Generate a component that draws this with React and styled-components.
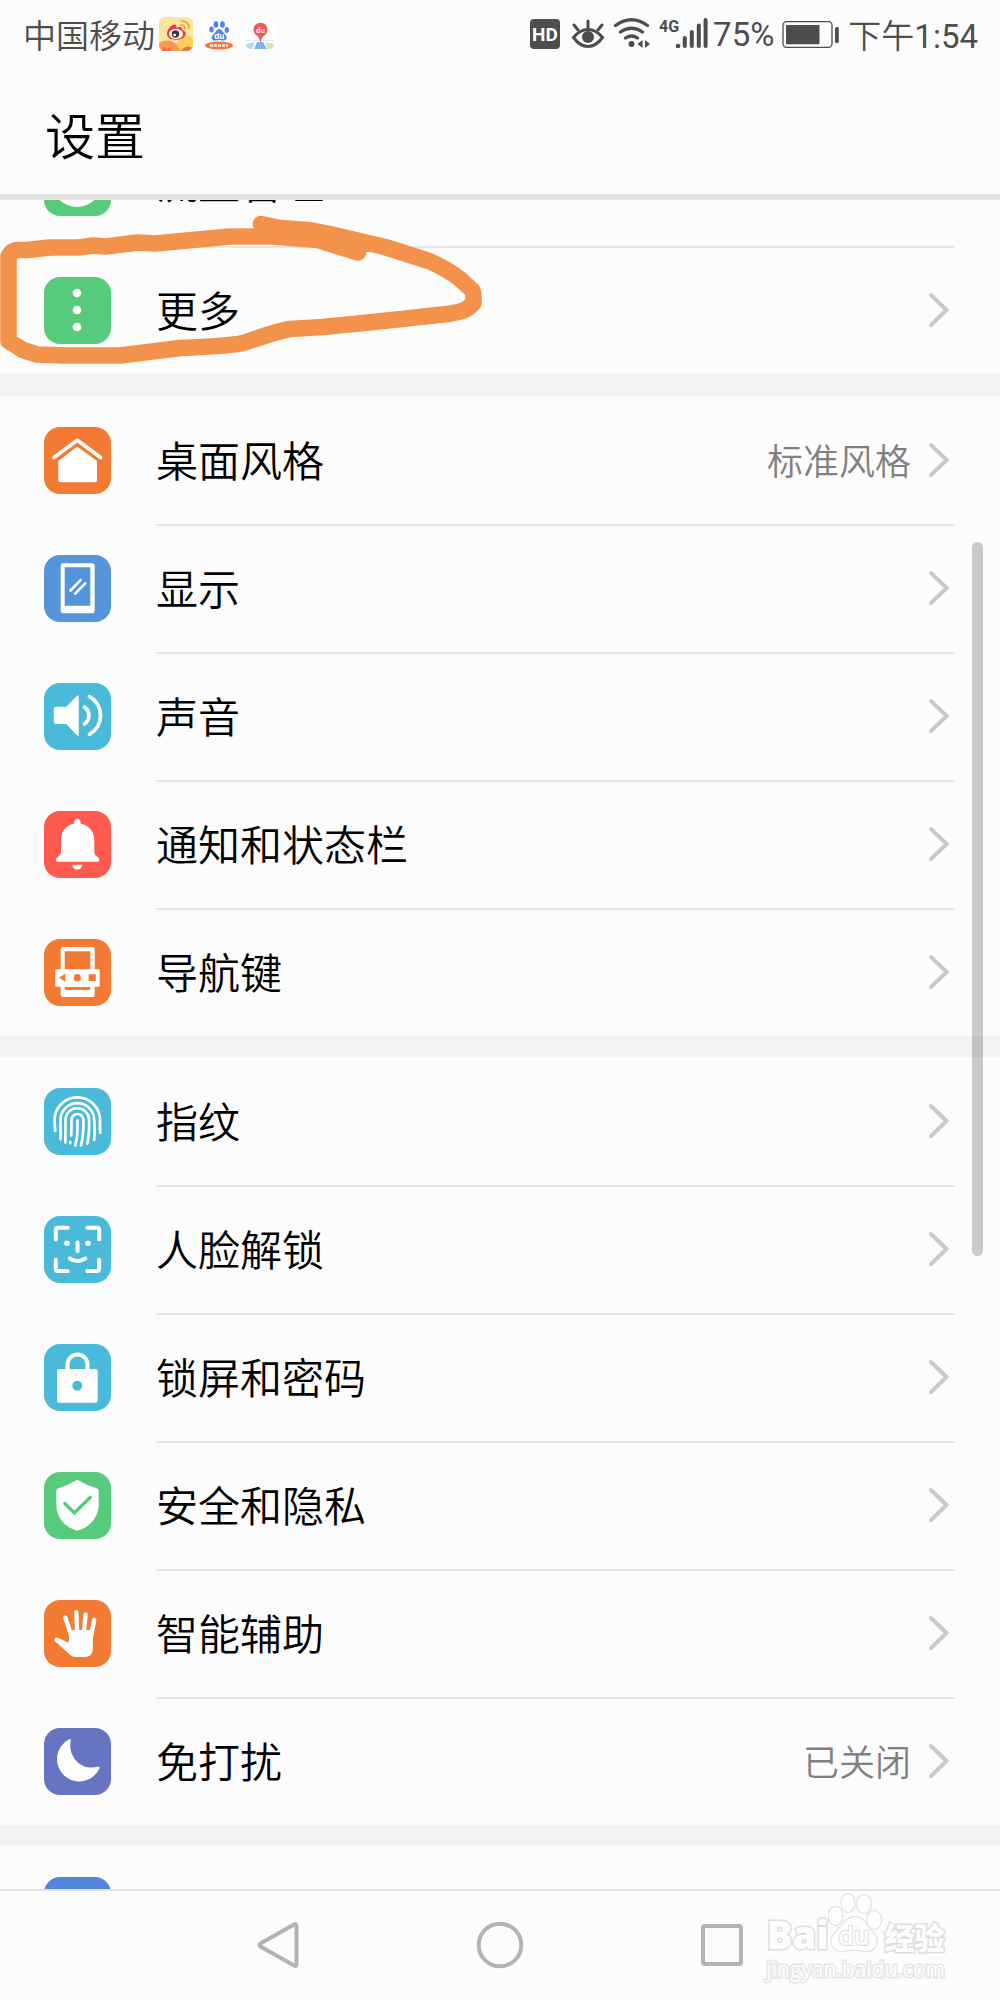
import { useLayoutEffect, useRef } from "react"

import styled, { createGlobalStyle } from "styled-components"


const colors = {
  green: "#56cb7b",
  orange: "#f37a32",
  blue: "#5596da",
  cyan: "#4abada",
  red: "#ff5a4d",
  purple: "#6674c2",
  royal: "#5485dc",
}

const icons = {

  data: <circle cx="33" cy="33" r="25" />,

  more: <><circle cx="33" cy="16" r="4.3" /><circle cx="33" cy="33" r="4.3" /><circle cx="33" cy="50" r="4.3" /></>,

  home: <>
    <path d="M10 30.5 33.3 13.3 56.600 30.5" fill="none" stroke="#fff" strokeWidth="3.800" strokeLinecap="round" strokeLinejoin="round" />
    <path d="M33.300 19.600 53 34V53.500Q53 55.300 51.200 55.300H16.200Q14.300 55.300 14.300 53.500V34Z" />
  </>,

  display: <>
    <path fillRule="evenodd" d="M19 8.300H48.400Q50.700 8.300 50.700 10.600V56Q50.700 58.300 48.400 58.300H19Q16.700 58.300 16.700 56V10.600Q16.700 8.300 19 8.300ZM20.700 12.300V50.700H46.300V12.300Z" />
    <path d="M26.500 35.500 36.600 25.200M31.200 38.700 41.300 28.400" stroke="#fff" strokeWidth="2.600" strokeLinecap="round" />
  </>,

  sound: <>
    <path d="M12 23.700H22.300L33 12.800Q34.800 11.500 34.800 13.500V51.500Q34.800 53.500 33 52.200L22.300 41H12Q9.700 41 9.700 38.700V26Q9.700 23.700 12 23.700Z" />
    <path d="M40.500 24A10.500 10.500 0 0 1 40.500 41M45.500 13.700A21.500 21.500 0 0 1 45.500 51.300" fill="none" stroke="#fff" strokeWidth="3.800" strokeLinecap="round" />
  </>,

  bell: <>
    <path d="M33.300 7.800C35.500 7.800 36.700 9.500 36.700 12.800C45 14.300 50.300 20.500 50.300 29V41Q50.300 44 53 45.600Q55.300 47 55.300 49.300Q55.300 50.700 53.600 50.700H13Q11.500 50.700 11.700 49Q12 47 14 45.800Q17 44 17 41V29C17 20.500 22 14.300 30 12.800C30 9.500 31.100 7.800 33.300 7.800Z" />
    <path d="M28.300 53.700H38.300A5 5 0 0 1 28.300 53.700Z" />
  </>,

  navkey: <>
    <path fillRule="evenodd" d="M19 8H48.400Q50.700 8 50.700 10.300V30.300H54.700Q55.700 30.300 55.700 31.300V46.700Q55.700 47.700 54.700 47.700H50.700V56Q50.700 58 48.400 58H19Q16.700 58 16.700 56V47.700H12.300Q11.300 47.700 11.300 46.700V31.300Q11.300 30.300 12.300 30.300H16.700V10.300Q16.700 8 19 8ZM20.700 12.300V30.300H46.300V12.300ZM20.700 48V50.900H46.300V48ZM15 38.700 21.300 42.800V34.500ZM44.700 35.300V42H51.700V35.300Z" />
    <circle cx="33.3" cy="38.7" r="3.6" fill={colors.orange} />
  </>,

  finger: <>
    <g fill="none" stroke="#fff" strokeWidth="2.700" strokeLinecap="round">
      <path d="M11.300 43Q10.600 38 10.600 32A22.700 22.700 0 0 1 56 32Q56 39 56.200 44.700" />
      <path d="M16.500 51.300V32A16.800 16.800 0 0 1 50.200 32Q51 45 50 52" />
      <path d="M21.300 54.300Q21.500 46 21.500 32A11.800 11.800 0 0 1 45.100 32Q45.500 46 43.300 55.600" />
      <path d="M27.200 47.500Q27.500 40 27.500 32A6 6 0 0 1 39.500 32Q39.500 48 37 57.500" />
      <path d="M33.500 32.500Q34 47 31.300 57.500M26.200 54V55.300" />
    </g>
  </>,

  face: <>
    <g fill="none" stroke="#fff" strokeWidth="4" strokeLinecap="round">
      <path d="M23.700 11.700H14Q11.800 11.700 11.800 14V23.300M43.300 11.700H53Q55.200 11.700 55.200 14V23.300M55.200 43.700V52.700Q55.200 55 53 55H43.300M23.700 55H14Q11.800 55 11.800 52.700V43.700" />
      <path d="M33.500 26.500V35M25.700 42.300Q33.500 47.700 41.300 42.300" />
    </g>
    <circle cx="23" cy="27.300" r="2.800" /><circle cx="44" cy="27.300" r="2.800" />
  </>,

  lock: <>
    <path d="M23.500 27V20.500A10 10 0 0 1 43.500 20.500V27" fill="none" stroke="#fff" strokeWidth="4" />
    <path fillRule="evenodd" d="M15 25H51.700Q53.700 25 53.700 27V56.700Q53.700 58.700 51.700 58.700H15Q13 58.700 13 56.700V27Q13 25 15 25ZM33.300 36.700A5 5 0 1 0 33.300 46.700A5 5 0 1 0 33.300 36.700Z" />
  </>,

  shield: <>
    <path d="M33.300 7.700Q43 13.300 53 16.600Q54.700 17.200 54.700 19V32C54.700 45 46.500 55 33.300 58.700C20 55 12.300 45 12.300 32V19Q12.300 17.200 14 16.600Q24 13.300 33.300 7.700Z" />
    <path d="M20.900 31.500 30.300 40.900 46.200 25.500" fill="none" stroke={colors.green} strokeWidth="3.300" strokeLinecap="round" />
  </>,

  hand: <>
    <path d="M12.500 39.700 29 47M21.300 17.700 27.500 36M32.300 12.300 33.300 36M41.600 14.500 39.500 36M50.200 19.800 46.500 39" stroke="#fff" strokeWidth="4.400" strokeLinecap="round" />
    <path d="M24.800 30H48.900V48Q48.900 56.700 41 56.900H31.500Q28.500 56.900 26 54.700L11.300 41.500 14 38 22 42Q25 43.300 25 40Z" />
  </>,

  moon: <path d="M25 11.300Q27 10.500 26.800 12.700C23.500 27 36 43.500 54 38.800Q56.300 38.500 55.500 40.500A22.300 22.300 0 1 1 25 11.300Z" />,

  user: <circle cx="33" cy="33" r="12" />,

}

const groups = [
  [
    { label: "流量管理", icon: "data", color: colors.green },
    { label: "更多", icon: "more", color: colors.green },
  ],
  [
    { label: "桌面风格", icon: "home", color: colors.orange, value: "标准风格" },
    { label: "显示", icon: "display", color: colors.blue },
    { label: "声音", icon: "sound", color: colors.cyan },
    { label: "通知和状态栏", icon: "bell", color: colors.red },
    { label: "导航键", icon: "navkey", color: colors.orange },
  ],
  [
    { label: "指纹", icon: "finger", color: colors.cyan },
    { label: "人脸解锁", icon: "face", color: colors.cyan },
    { label: "锁屏和密码", icon: "lock", color: colors.cyan },
    { label: "安全和隐私", icon: "shield", color: colors.green },
    { label: "智能辅助", icon: "hand", color: colors.orange },
    { label: "免打扰", icon: "moon", color: colors.purple, value: "已关闭" },
  ],
  [
    { label: "", icon: "user", color: colors.royal },
  ],
]

const WeiboIcon = () => (
  <svg width="34" height="34" viewBox="0 0 34 34">
    <rect width="34" height="34" rx="6" fill="#fce49b" />
    <path d="M22 20Q30 16 34 22V28A6 6 0 0 1 28 34H12Z" fill="#f9cf5b" />
    <path d="M0 26Q8 21 16 26Q21 30 20 34H6A6 6 0 0 1 0 28Z" fill="#f79a56" />
    <path d="M3 34 5 29 8 33 11 30 13 34ZM22 34Q27 27 33 31L29 34Z" fill="#f4703c" />
    <path d="M8 17C8 12 14 6 17 8Q18 9 17.500 11C21 9 24 10 23 13C27 14 27.500 17 26 19C23 24 8 24.500 8 17Z" fill="#e73a43" />
    <ellipse cx="17" cy="17" rx="7" ry="5" fill="#fff" />
    <circle cx="16.500" cy="17" r="3.700" fill="#3d3a3a" /><circle cx="15.700" cy="18" r="1.300" fill="#fff" />
    <path d="M22 8Q26 8 26 12M22.500 4Q30 4 30 11" fill="none" stroke="#f79a3e" strokeWidth="1.700" strokeLinecap="round" />
  </svg>
)

const BaiduIcon = () => (
  <svg width="30" height="34" viewBox="0 0 30 34">
    <rect x="1" y="2" width="28" height="30" rx="5" fill="#fff" />
    <g fill="#4c84f3">
      <ellipse cx="12" cy="7.500" rx="2.400" ry="3.300" /><ellipse cx="18.500" cy="7.500" rx="2.400" ry="3.300" />
      <ellipse cx="7.500" cy="12.500" rx="2.200" ry="2.900" /><ellipse cx="22.800" cy="13" rx="2.200" ry="2.900" />
      <path d="M15 12Q17.500 12 19 15L22 18.500C24 22 21 24 18.500 23.500Q15 22.700 12 23.500C8 24 6.500 21 8.500 18.500L11.500 15Q13 12 15 12Z" />
    </g>
    <text x="15.300" y="22" textAnchor="middle" fontFamily="Inter, sans-serif" fontSize="8" fontWeight="700" fill="#fff">du</text>
    <ellipse cx="15" cy="28.500" rx="14" ry="4" fill="#f5763b" />
    <path d="M6 28.500H24" stroke="#fff" strokeWidth="2.600" strokeDasharray="3 1" opacity=".8" />
  </svg>
)

const MapIcon = () => (
  <svg width="30" height="34" viewBox="0 0 30 34">
    <rect y="2" width="30" height="30" rx="6" fill="#fff" />
    <path d="M1 23H29V24H1Z" fill="#e4e8ec" />
    <path d="M1 27 10 25 7 32H5Q1 31 1 27Z" fill="#a8dcf5" /><path d="M29 27 20 25 23 32H25Q29 31 29 27Z" fill="#cdeaa0" />
    <path d="M12 25H18L22 32H9Z" fill="#7ab6f5" />
    <path d="M15.500 26Q14.500 20 11 18A7 7 0 1 1 20 18Q16.500 20 15.500 26Z" fill="#ee5a56" />
    <text x="15.500" y="16" textAnchor="middle" fontFamily="Inter, sans-serif" fontSize="7" fontWeight="700" fill="#fff">du</text>
  </svg>
)

const SignalIcons = () => (
  <svg width="178" height="34" viewBox="528 17 178 34" fill="#4d4d4d">
    <rect x="528" y="19" width="30" height="30" rx="4" />
    <text x="543" y="41" textAnchor="middle" fontFamily="Roboto, sans-serif" fontSize="19" fontWeight="700" fill="#fff">HD</text>
    <path d="M571.500 37.500Q578 29.500 586 29.500T600.500 37.500Q594 46.500 586 46.500T571.500 37.500Z" fill="none" stroke="#4d4d4d" strokeWidth="3" />
    <circle cx="586" cy="37" r="6" />
    <path d="M586 21V28M572 25 576 30M600 25 596 30" stroke="#4d4d4d" strokeWidth="3" strokeLinecap="round" />
    <g fill="none" stroke="#4d4d4d" strokeWidth="3.200" strokeLinecap="round">
      <path d="M613.500 25.500Q629.500 14 645.500 25.500M618.500 32Q629.500 24.500 640.500 32M623.500 38Q629.500 34 635.500 38" />
    </g>
    <circle cx="629.500" cy="44" r="3" />
    <path d="M640.500 40V48L635.500 44ZM643 40V48L648 44Z" />
    <text x="657" y="31.500" fontFamily="Roboto, sans-serif" fontSize="16" fontWeight="700" textAnchor="start">4G</text>
    <circle cx="676" cy="46" r="2.300" />
    <path d="M682.800 38V46M689.800 32V46M696.800 25.500V46M703.600 20V46" stroke="#4d4d4d" strokeWidth="4" strokeLinecap="round" />
  </svg>
)

const BatteryIcon = () => (
  <svg width="58" height="34" viewBox="781 17 58 34" fill="#4d4d4d">
    <rect x="782" y="21.700" width="49" height="25.600" rx="3.500" fill="none" stroke="#4d4d4d" strokeWidth="1.300" />
    <rect x="785" y="25" width="33.500" height="19.300" rx="1" />
    <rect x="834" y="27" width="3.800" height="16" rx="1.500" />
  </svg>
)

const Chevron = () => (
  <svg width="22" height="36" viewBox="0 0 22 36" fill="none" stroke="#c9c9c9" strokeWidth="4" strokeLinecap="round">
    <path d="M3 3 18.500 18 3 33" />
  </svg>
)

const Scribble = () => (
  <ScribbleStyle width="490" height="160" viewBox="0 210 490 160" aria-hidden="true">
    <path d="M261 224 280 228 308 230 334 235 385 247 429 261Q447 269 460 279L472 290Q474 293 473.500 303L468 308Q461 313 438 315L383 321 323 327 290 329Q278 331 243 343 230 346 180 348L120 355.500H67L37 354.500 23 350 8.500 341V256L11 253Q13 250 18 250H27L50 247.500H78L93 245.500 106 246.500 138 242.500 155 243.500 230 236.500H273L318 240 358 252.500" />
  </ScribbleStyle>
)

const Watermark = () => (
  <WatermarkStyle>
    <div className="brand">
      <span className="bai">Bai</span>
      <svg width="54" height="60" viewBox="0 0 54 60">
        <ellipse cx="7.500" cy="23" rx="7" ry="9" /><ellipse cx="20" cy="10" rx="6.600" ry="9" />
        <ellipse cx="36" cy="11" rx="7" ry="9" /><ellipse cx="46" cy="27" rx="7" ry="9" />
        <path d="M27 24C36 24 39 34 44 39C54 49 46 58 39 58C34 58 31 56.500 26 56.500S18 58 13 58C4 57 0 48 7 40C13 35 17 24 27 24Z" />
        <text x="26" y="52" textAnchor="middle">du</text>
      </svg>
      <span className="exp">经验</span>
    </div>
    <div className="site">jingyan.baidu.com</div>
  </WatermarkStyle>
)

const SettingRow = ({ label, icon, color, value }) => (
  <RowStyle type="button" aria-label={label || "账户"}>
    <TileStyle viewBox="0 0 67 67" $color={color}>{icons[icon]}</TileStyle>
    <BodyStyle>
      <span className="label">{label}</span>
      {value && <span className="value">{value}</span>}
      <Chevron />
    </BodyStyle>
  </RowStyle>
)

const App = () => {

  const list = useRef(null)

  useLayoutEffect(() => {

    list.current.scrollTop = 82

  }, [])

  return (

    <ScreenStyle>

      <GlobalStyle />

      <StatusBarStyle>
        <div className="side apps">
          <span>中国移动</span>
          <WeiboIcon />
          <BaiduIcon />
          <MapIcon />
        </div>
        <div className="side">
          <SignalIcons />
          <b>75%</b>
          <BatteryIcon />
          <span>下午<b>1:54</b></span>
        </div>
      </StatusBarStyle>

      <HeaderStyle><h1>设置</h1></HeaderStyle>

      <ListStyle ref={list}>
        {groups.map((rows, i) => (
          <GroupStyle key={i}>
            {rows.map(row => <SettingRow {...row} key={row.icon} />)}
          </GroupStyle>
        ))}
      </ListStyle>

      <NavBarStyle>
        <button type="button" aria-label="返回">
          <svg width="46" height="50" viewBox="0 0 46 50"><path d="M39 4.500Q41.500 3 41.500 6V44Q41.500 47 39 45.500L5.500 26.500Q3.500 25 5.500 23.500Z" /></svg>
        </button>
        <button type="button" aria-label="主页">
          <svg width="50" height="50" viewBox="0 0 50 50"><circle cx="25" cy="25" r="21.300" /></svg>
        </button>
        <button type="button" aria-label="最近任务">
          <svg width="46" height="46" viewBox="0 0 46 46"><rect x="4" y="4" width="38" height="38" rx="2" /></svg>
        </button>
      </NavBarStyle>

      <ThumbStyle />
      <Scribble />
      <Watermark />

    </ScreenStyle>

  )

}

const GlobalStyle = createGlobalStyle`

  *{
    box-sizing: border-box;
  }

  body{
    margin: 0;
    background: #fcfcfc;
    font-family: Roboto, "Noto Sans CJK SC", sans-serif;
  }

  button{
    border: 0;
    padding: 0;
    background: none;
    font: inherit;
    color: inherit;
  }

  svg{
    display: block;
    flex: none;
  }

`

const ScreenStyle = styled.div`
  position: relative;
  display: flex;
  flex-direction: column;
  height: 100vh;
  overflow: hidden;
  background: #fcfcfc;
`

const StatusBarStyle = styled.div`
  display: flex;
  justify-content: space-between;
  height: 68px;
  padding: 0 22px 0 23px;
  color: #4d4d4d;
  font-size: 33px;
  font-weight: 350;

  .side{
    display: flex;
    align-items: center;
    gap: 8px;
    white-space: nowrap;
  }

  .side svg + b{
    margin-left: -3px;
  }

  .apps{
    gap: 11px;
  }

  .apps span{
    margin-right: -7px;
  }

  b{
    font-weight: 400;
  }
`

const HeaderStyle = styled.header`
  display: flex;
  align-items: center;
  height: 132px;
  padding: 4px 45px 0;
  border-bottom: 6px solid #e2e2e2;

  h1{
    margin: 0;
    color: #000;
    font-size: 50px;
    font-weight: 350;
  }
`

const ListStyle = styled.main`
  flex: 1;
  min-height: 0;
  overflow-y: auto;
  scrollbar-width: none;
`

const GroupStyle = styled.section`
  & + &{
    border-top: 22px solid #f3f3f3;
  }

  & + & + &{
    border-top-width: 21px;
  }
`

const BodyStyle = styled.span`
  display: flex;
  flex: 1;
  align-items: center;
  height: 100%;
  padding-right: 5px;

  .label, .value{
    padding-top: 5px;
    font-weight: 350;
  }

  .label{
    flex: 1;
    color: #000;
    font-size: 42px;
  }

  .value{
    margin-right: 17px;
    color: #808080;
    font-size: 36px;
  }
`

const RowStyle = styled.button`
  display: flex;
  align-items: center;
  gap: 45px;
  width: 100%;
  height: 128px;
  padding: 0 45px 0 44px;
  text-align: left;
  line-height: 1;

  & + & ${BodyStyle}{
    box-shadow: inset 0 2px #e6e6e6;
  }
`

const TileStyle = styled.svg`
  width: 67px;
  height: 67px;
  border-radius: 16px;
  background: ${p => p.$color};
  fill: #fff;
`

const NavBarStyle = styled.nav`
  display: flex;
  justify-content: center;
  height: 111px;
  padding-bottom: 2px;
  border-top: 2px solid #e3e3e3;

  button{
    display: flex;
    align-items: center;
    justify-content: center;
    width: 222px;
  }

  svg{
    fill: none;
    stroke: #b3b3b3;
    stroke-width: 4;
  }
`

const ThumbStyle = styled.div`
  position: absolute;
  top: 542px;
  right: 17px;
  width: 11px;
  height: 714px;
  border-radius: 6px;
  background: rgba(0, 0, 0, 0.2);
`

const ScribbleStyle = styled.svg`
  position: absolute;
  top: 210px;
  left: 0;
  fill: none;
  stroke: #f3924a;
  stroke-width: 16.6;
  stroke-linecap: round;
  stroke-linejoin: round;
  pointer-events: none;
`

const WatermarkStyle = styled.div`
  position: absolute;
  right: 55px;
  bottom: 20px;
  color: #fdfdfd;
  font-family: "Open Sans", "Noto Sans CJK SC", sans-serif;
  line-height: 1;
  -webkit-text-stroke: 3px #dedede;
  paint-order: stroke fill;
  pointer-events: none;

  .brand{
    display: flex;
    align-items: flex-end;
    justify-content: center;
  }

  .bai{
    font-size: 38px;
    font-weight: 800;
  }

  .exp{
    margin-left: 2px;
    font-size: 30px;
    font-weight: 900;
  }

  svg{
    fill: #fdfdfd;
    stroke: #dedede;
    stroke-width: 2;
    -webkit-text-stroke: 0;
  }

  text{
    font-size: 25px;
    font-weight: 600;
  }

  .site{
    margin-top: 6px;
    font-size: 21px;
    font-weight: 400;
    text-align: center;
    -webkit-text-stroke: 3px #e6e6e6;
  }
`

export default App
